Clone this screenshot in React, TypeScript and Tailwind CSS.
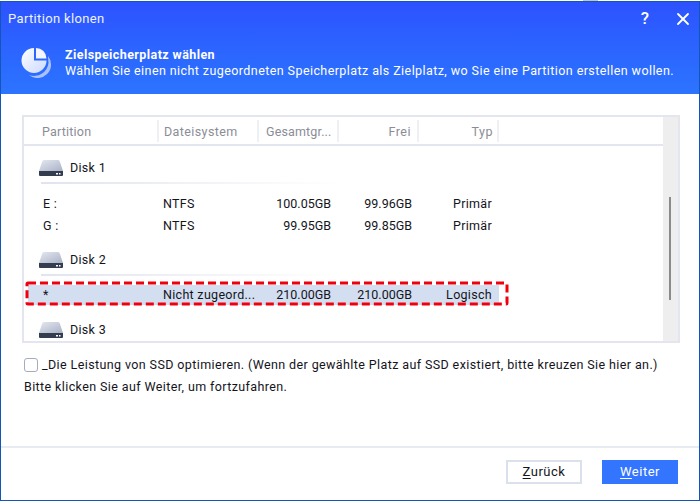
import { X } from "lucide-react";

function PieLogo() {
  return (
    <svg width="32" height="32" viewBox="0 0 32 32" className="shrink-0">
      <defs>
        <linearGradient id="pieMain" x1="0" y1="0" x2="1" y2="1">
          <stop offset="0" stopColor="#ffffff" />
          <stop offset="1" stopColor="#cbd9ff" />
        </linearGradient>
      </defs>
      <path d="M27 10 A13.5 13.5 0 0 1 8 29 A14.5 14.5 0 0 0 27.5 17 Z" fill="#a9c2ff" />
      <path d="M13 2 A12.5 12.5 0 1 0 25.5 14.5 H13 Z" fill="url(#pieMain)" />
      <path d="M15 2 A10.5 10.5 0 0 1 25.5 12.5 H15 Z" fill="#f3f6ff" />
    </svg>
  );
}

function DiskIcon() {
  return (
    <svg width="24" height="18" viewBox="0 0 24 18" className="shrink-0">
      <defs>
        <linearGradient id="diskTop" x1="0" y1="0" x2="1" y2="1">
          <stop offset="0" stopColor="#e4e8f0" />
          <stop offset="1" stopColor="#a9b1c6" />
        </linearGradient>
      </defs>
      <path d="M5 1 H19 Q20.5 1 21 3 L24 12 H0 L3 3 Q3.5 1 5 1 Z" fill="url(#diskTop)" />
      <path d="M0 12 H24 V16 Q24 17 23 17 H1 Q0 17 0 16 Z" fill="#343c50" />
      <rect x="17" y="14" width="2" height="1.5" fill="#ffffff" />
      <rect x="20" y="14" width="1.5" height="1.5" fill="#ffffff" />
    </svg>
  );
}

function DiskRow({ name, className }: { name: string; className: string }) {
  return (
    <div className={`flex items-center ml-[15px] h-[18px] ${className}`}>
      <DiskIcon />
      <span className="ml-[7px] tracking-[0.3px]">{name}</span>
    </div>
  );
}

function PartRow({ d }: { d: string[] }) {
  return (
    <div className="flex items-center h-[22px]">
      <span className="w-[139px] pl-[19px] tracking-[0.3px]">{d[0]}</span>
      <span className="w-[100px] tracking-[0.3px]">{d[1]}</span>
      <span className="w-[68px] text-right">{d[2]}</span>
      <span className="w-[81px] text-right">{d[3]}</span>
      <span className="w-[80px] text-right tracking-[0.3px]">{d[4]}</span>
    </div>
  );
}

const heads = [
  { t: "Partition", w: "w-[135px] pl-[18px]", s: "tracking-[0.2px]" },
  { t: "Dateisystem", w: "w-[100px] pl-[5px]", s: "tracking-[0.4px]" },
  { t: "Gesamtgr...", w: "w-[80px] pl-[7px]", s: "tracking-[0.15px]" },
  { t: "Frei", w: "w-[80px] pr-[6px] text-right", s: "tracking-[0.5px]" },
  { t: "Typ", w: "w-[80px] pr-[4px] text-right", s: "tracking-[0.5px]" },
];

export default function App() {
  return (
    <div className="w-[700px] h-[501px] bg-white overflow-hidden text-[12.5px] text-[#14141c] font-['Roboto',sans-serif]">
      <div className="ml-[583px] w-[15px] h-px bg-[#c4c4c4]" />
      <div className="h-[500px] border border-[#1456b8] flex flex-col">
        <div className="h-[92px] bg-gradient-to-b from-[#2d52ff] to-[#2c74ff] text-white shrink-0">
          <div className="flex items-center justify-between h-[33px] pl-[7px] pr-[6px]">
            <span className="text-[13px] tracking-[0.35px] text-[#eef2ff]">Partition klonen</span>
            <div className="flex items-center gap-[24px]">
              <span className="text-[17px] font-medium leading-none">?</span>
              <X size={20} strokeWidth={2.2} />
            </div>
          </div>
          <div className="flex items-center pl-[20px] mt-[11px]">
            <PieLogo />
            <div className="ml-[12px] tracking-[0.42px]">
              <div className="font-bold leading-[17px]">Zielspeicherplatz wählen</div>
              <div className="leading-[15px]">Wählen Sie einen nicht zugeordneten Speicherplatz als Zielplatz, wo Sie eine Partition erstellen wollen.</div>
            </div>
          </div>
        </div>

        <div className="flex-1 relative">
          <div className="ml-[21px] mt-[21px] w-[658px] h-[228px] border-2 border-[#e3e6ee] flex overflow-hidden">
            <div className="w-[639px] h-full overflow-hidden">
              <div className="h-[29px] border-b-2 border-[#e3e6ee] flex items-start pt-[3px] text-[#8a8d96]">
                {heads.map((h) => (
                  <div key={h.t} className={`${h.w} ${h.s} h-[22px] leading-[24px] border-r-2 border-[#eef0f4]`}>{h.t}</div>
                ))}
              </div>
              <DiskRow name="Disk 1" className="mt-[13px]" />
              <div className="ml-[17px] w-[296px] h-[2px] mt-[5px] bg-gradient-to-r from-[#e0e4ee] to-white" />
              <div className="mt-[9px]">
                <PartRow d={["E :", "NTFS", "100.05GB", "99.96GB", "Primär"]} />
                <PartRow d={["G :", "NTFS", "99.95GB", "99.85GB", "Primär"]} />
              </div>
              <DiskRow name="Disk 2" className="mt-[14px]" />
              <div className="ml-[17px] w-[296px] h-[2px] mt-[5px] bg-gradient-to-r from-[#e0e4ee] to-white" />
              <div className="ml-[4px] w-[471px] bg-[#d3dff0] mt-[9px] h-[20px] flex items-center">
                <span className="w-[135px] pl-[15px]">*</span>
                <span className="w-[100px] whitespace-nowrap tracking-[0.3px]">Nicht zugeord...</span>
                <span className="w-[68px] text-right">210.00GB</span>
                <span className="w-[81px] text-right">210.00GB</span>
                <span className="w-[80px] text-right tracking-[0.3px]">Logisch</span>
              </div>
              <DiskRow name="Disk 3" className="mt-[16px]" />
            </div>
            <div className="w-[15px] h-full bg-[#eeeeee] relative">
              <div className="absolute left-[6px] top-[80px] w-[2px] h-[103px] bg-[#8b8b8b]" />
            </div>
          </div>

          {/* red marker over the selected row */}
          <svg className="absolute left-[24px] top-[187px]" width="485" height="25">
            <rect x="2" y="2" width="480" height="21" rx="1" fill="none" stroke="#f0000f" strokeWidth="3" strokeDasharray="8 4" />
          </svg>

          <div className="ml-[23px] mt-[14px] flex items-center h-[16px] tracking-[0.39px]">
            <span className="w-[14px] h-[14px] border border-[#a4abbe] rounded-[3px] shrink-0" />
            <span className="ml-[4px]">_Die Leistung von SSD optimieren. (Wenn der gewählte Platz auf SSD existiert, bitte kreuzen Sie hier an.)</span>
          </div>
          <div className="ml-[23px] mt-[6px] leading-[16px] tracking-[0.39px]">Bitte klicken Sie auf Weiter, um fortzufahren.</div>

          <div className="absolute left-0 right-0 bottom-[52px] h-[2px] bg-[#e9ebf2]" />
          <div className="absolute right-[21px] bottom-[16px] flex gap-[20px] text-[13px] tracking-[0.5px]">
            <button className="w-[76px] h-[24px] border-2 border-[#dbe0ec] bg-white"><span className="underline underline-offset-2">Z</span>urück</button>
            <button className="w-[76px] h-[24px] bg-[#3375ff] text-white"><span className="underline underline-offset-2">W</span>eiter</button>
          </div>
        </div>
      </div>
    </div>
  );
}
